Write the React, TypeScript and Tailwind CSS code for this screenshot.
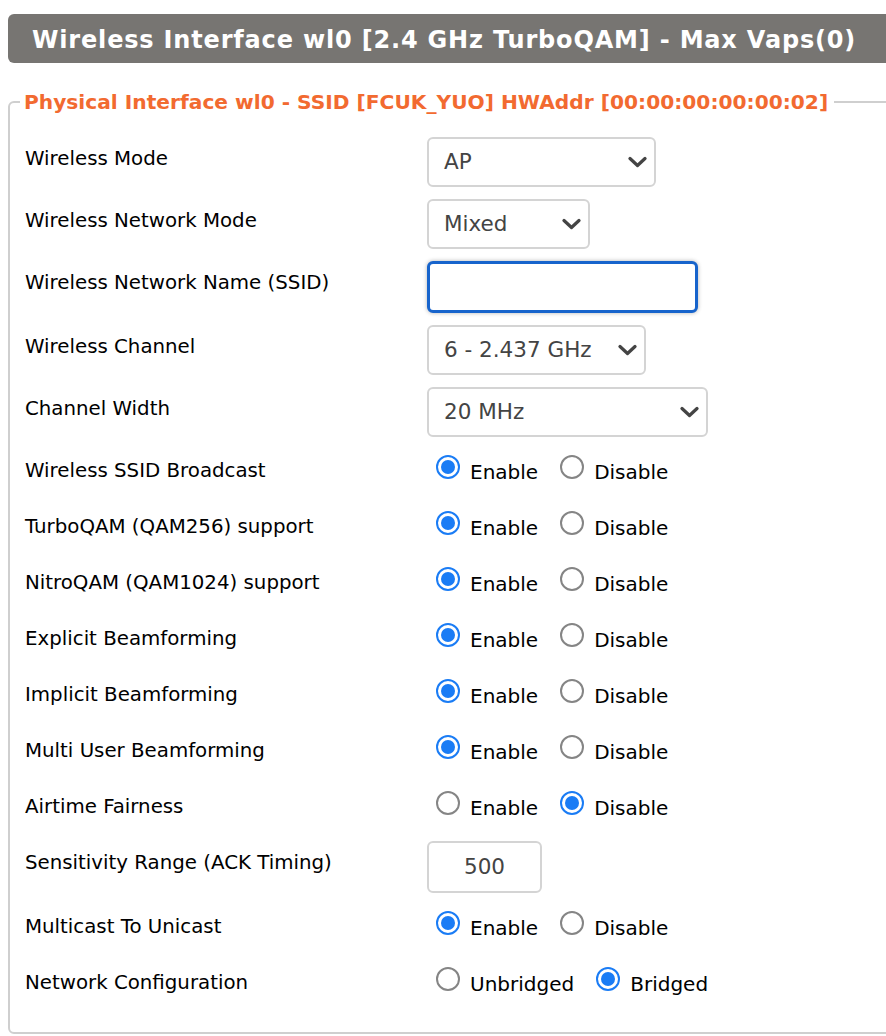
import React from "react";

const font = { fontFamily: '"DejaVu Sans", sans-serif' };

function Chevron() {
  return (
    <svg width="19" height="12" viewBox="0 0 19 12" className="shrink-0">
      <path d="M2 2.5 L9.5 9.5 L17 2.5" fill="none" stroke="#444" strokeWidth="3.2" strokeLinecap="round" strokeLinejoin="round" />
    </svg>
  );
}

function Select({ value, width }: { value: string; width: string }) {
  return (
    <div
      className={`flex h-[50px] ${width} items-center justify-between rounded-[6px] border-2 border-[#d4d4d4] bg-white pl-[15px] pr-[7px] text-[21.5px] text-[#444]`}
    >
      <span>{value}</span>
      <Chevron />
    </div>
  );
}

function Radio({ checked, label }: { checked: boolean; label: string }) {
  return (
    <label className="flex items-start">
      <span
        className={`mt-[6px] flex h-[24px] w-[24px] items-center justify-center rounded-full border-2 bg-white ${
          checked ? "border-[#1a7cf5]" : "border-[#858585]"
        }`}
      >
        {checked && <span className="h-[14px] w-[14px] rounded-full bg-[#1a7cf5]" />}
      </span>
      <span className="ml-[10px] mt-[10px] text-[20px] leading-[26px] text-black">{label}</span>
    </label>
  );
}

function RadioPair({ a, b, first }: { a: string; b: string; first: boolean }) {
  return (
    <div className="flex h-[44px] items-start gap-[22px] pl-[9px]">
      <Radio checked={first} label={a} />
      <Radio checked={!first} label={b} />
    </div>
  );
}

function Row({ label, children, h = "h-[44px]" }: { label: string; children: React.ReactNode; h?: string }) {
  return (
    <div className={`flex ${h} items-start`}>
      <div className="w-[402px] shrink-0 pt-[10px] text-[19.8px] leading-[24px] text-black">{label}</div>
      <div>{children}</div>
    </div>
  );
}

const radios: [string, boolean][] = [
  ["Wireless SSID Broadcast", true],
  ["TurboQAM (QAM256) support", true],
  ["NitroQAM (QAM1024) support", true],
  ["Explicit Beamforming", true],
  ["Implicit Beamforming", true],
  ["Multi User Beamforming", true],
  ["Airtime Fairness", false],
];

export default function App() {
  return (
    <div className="h-[1036px] w-[886px] overflow-hidden bg-white" style={font}>
      <div className="w-[920px] pl-[8px] pt-[14px]">
        <div className="flex h-[49px] items-center rounded-l-[6px] bg-[#777572] pl-[24px] pt-[2px] text-[24px] font-bold tracking-[0.82px] text-white">
          Wireless Interface wl0 [2.4 GHz TurboQAM] - Max Vaps(0)
        </div>
        <fieldset className="mt-[26px] rounded-[6px] border-2 border-[#cfcfcf] pb-[27px] pl-[15px]">
          <legend className="ml-[-5px] pl-[4px] pr-[6px] text-[20.2px] font-bold leading-[26px] text-[#f26a30]">
            Physical Interface wl0 - SSID [FCUK_YUO] HWAddr [00:00:00:00:00:02]
          </legend>
          <div className="mt-[22px] flex flex-col gap-[12px]">
            <Row label="Wireless Mode" h="h-[50px]">
              <Select value="AP" width="w-[229px]" />
            </Row>
            <Row label="Wireless Network Mode" h="h-[50px]">
              <Select value="Mixed" width="w-[163px]" />
            </Row>
            <Row label="Wireless Network Name (SSID)" h="h-[52px]">
              <input
                className="h-[52px] w-[271px] rounded-[6px] border-[3px] border-[#1764cc] bg-white px-[12px] text-[20px] shadow-[0_0_4px_rgba(0,0,0,0.3)] outline-none"
                defaultValue=""
              />
            </Row>
            <Row label="Wireless Channel" h="h-[50px]">
              <Select value="6 - 2.437 GHz" width="w-[219px]" />
            </Row>
            <Row label="Channel Width" h="h-[50px]">
              <Select value="20 MHz" width="w-[281px]" />
            </Row>
            {radios.map(([l, on]) => (
              <Row key={l} label={l}>
                <RadioPair a="Enable" b="Disable" first={on} />
              </Row>
            ))}
            <Row label="Sensitivity Range (ACK Timing)" h="h-[52px]">
              <div className="flex h-[52px] w-[115px] items-center justify-center rounded-[6px] border-2 border-[#d4d4d4] text-[21.5px] text-[#444]">
                500
              </div>
            </Row>
            <Row label="Multicast To Unicast">
              <RadioPair a="Enable" b="Disable" first={true} />
            </Row>
            <Row label="Network Configuration">
              <RadioPair a="Unbridged" b="Bridged" first={false} />
            </Row>
          </div>
        </fieldset>
      </div>
    </div>
  );
}
